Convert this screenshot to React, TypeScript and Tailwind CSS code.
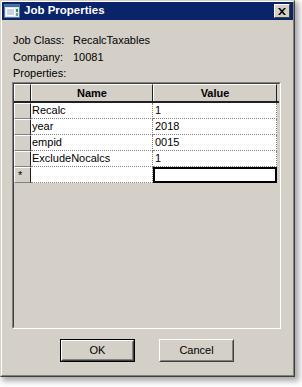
import React from "react";

const rows = [
    { name: "Recalc", value: "1" },
    { name: "year", value: "2018" },
    { name: "empid", value: "0015" },
    { name: "ExcludeNocalcs", value: "1" },
];

function TitleIcon() {
    return (
        <svg width="16" height="14" viewBox="0 0 16 14">
            <rect x="0.5" y="0.5" width="15" height="13" fill="#dfe6ee" stroke="#5a7898" />
            <rect x="1" y="1" width="14" height="2" fill="#3a6ea5" />
            <rect x="2" y="4" width="9" height="8" fill="#ffffff" />
            <rect x="3" y="5" width="7" height="6" fill="#c8d4e0" />
            <rect x="12" y="5" width="2" height="3" fill="#2e9a3a" />
            <rect x="12" y="9" width="2" height="3" fill="#7a8ea6" />
        </svg>
    );
}

function RowHeader({ star }: { star?: boolean }) {
    return (
        <div className="w-[17px] h-full bg-[#d4d0c8] border-t border-l border-t-white border-l-white border-r border-r-[#202020] border-b border-b-[#808080] flex items-center pl-[3px] text-[11px] leading-none">
            {star ? "*" : ""}
        </div>
    );
}

export default function App() {
    return (
        <div className="w-[302px] h-[387px] bg-white overflow-hidden" style={{ fontFamily: '"Liberation Sans", Arial, sans-serif' }}>
            <div className="w-[295px] h-[377px] border border-t-[#d4d0c8] border-l-[#d4d0c8] border-r-[#404040] border-b-[#404040] shadow-[3px_3px_6px_1px_rgba(0,0,0,0.35)]">
                <div className="w-full h-full bg-[#d4d0c8] border border-t-white border-l-white border-r-[#808080] border-b-[#808080] flex flex-col">
                    {/* Title bar */}
                    <div className="h-[18px] bg-[#0a246a] flex items-center pl-[2px] pr-[3px]">
                        <TitleIcon />
                        <span className="ml-[4px] text-white font-bold text-[11.5px] leading-none flex-1">Job Properties</span>
                        <div className="w-[16px] h-[14px] bg-[#d4d0c8] border border-t-white border-l-white border-r-[#404040] border-b-[#404040] flex items-center justify-center">
                            <svg width="8" height="7" viewBox="0 0 8 7">
                                <path d="M0 0h2l2 2.2L6 0h2L5 3.5 8 7H6L4 4.8 2 7H0l3-3.5z" fill="#000" />
                            </svg>
                        </div>
                    </div>

                    {/* Content */}
                    <div className="flex flex-col pt-[12px] pl-[10px] text-[11px] text-black">
                        <div className="h-[17px] flex items-center pl-[1px]">
                            <span className="w-[60px]">Job Class:</span>
                            <span>RecalcTaxables</span>
                        </div>
                        <div className="h-[16px] flex items-center pl-[1px]">
                            <span className="w-[60px]">Company:</span>
                            <span>10081</span>
                        </div>
                        <div className="h-[16px] flex items-center pl-[1px]">Properties:</div>

                        {/* Grid */}
                        <div className="mt-[1px] w-[269px] h-[247px] border border-t-[#808080] border-l-[#808080] border-r-white border-b-white">
                            <div className="w-full h-full border border-t-[#404040] border-l-[#404040] border-r-[#d4d0c8] border-b-[#d4d0c8] bg-[#d4d0c8] flex flex-col">
                                <div className="h-[19px] flex border-b-2 border-b-[#202020]">
                                    <div className="w-[17px] h-full bg-[#d4d0c8] border-t border-l border-t-white border-l-white border-r border-r-[#202020]" />
                                    <div className="w-[122px] h-full border-t border-l border-t-white border-l-white border-r border-r-[#202020] flex items-center justify-center font-bold">Name</div>
                                    <div className="w-[124px] h-full border-t border-l border-t-white border-l-white border-r border-r-[#202020] flex items-center justify-center font-bold">Value</div>
                                </div>
                                {rows.map((r) => (
                                    <div key={r.name} className="h-[16px] flex">
                                        <RowHeader />
                                        <div className="w-[122px] h-full bg-white border-r border-b border-dotted border-r-[#808080] border-b-[#808080] flex items-center pl-[1px]">{r.name}</div>
                                        <div className="w-[124px] h-full bg-white border-r border-b border-dotted border-r-[#808080] border-b-[#808080] flex items-center pl-[2px]">{r.value}</div>
                                    </div>
                                ))}
                                <div className="h-[16px] flex">
                                    <RowHeader star />
                                    <div className="w-[122px] h-full bg-white border-r border-b border-dotted border-r-[#808080] border-b-[#808080]" />
                                    <div className="w-[124px] h-full bg-white border-2 border-black" />
                                </div>
                            </div>
                        </div>
                    </div>

                    {/* Buttons */}
                    <div className="mt-[10px] flex justify-center gap-[24px] text-[11px] pr-[1px]">
                        <div className="w-[75px] h-[23px] border border-black">
                            <div className="w-full h-full bg-[#d4d0c8] border border-t-white border-l-white border-r-[#404040] border-b-[#404040] flex items-center justify-center">
                                <div className="w-full h-full border border-transparent border-r-[#808080] border-b-[#808080] flex items-center justify-center">OK</div>
                            </div>
                        </div>
                        <div className="w-[75px] h-[23px] bg-[#d4d0c8] border border-t-white border-l-white border-r-[#404040] border-b-[#404040]">
                            <div className="w-full h-full border border-transparent border-r-[#808080] border-b-[#808080] flex items-center justify-center">Cancel</div>
                        </div>
                    </div>
                </div>
            </div>
        </div>
    );
}
